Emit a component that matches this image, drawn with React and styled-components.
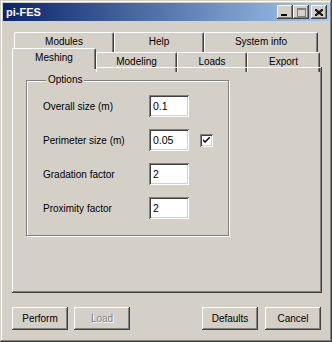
import React from "react";
import styled, { createGlobalStyle, css } from "styled-components";

const Global = createGlobalStyle`
  html, body {
    margin: 0;
    padding: 0;
    background: #d4d0c8;
  }
  * {
    box-sizing: border-box;
  }
`;

const raised = css`
  box-shadow: inset -1px -1px #404040, inset 1px 1px #ffffff,
    inset -2px -2px #808080, inset 2px 2px #d4d0c8;
`;

const sunken = css`
  box-shadow: inset 1px 1px #808080, inset -1px -1px #ffffff,
    inset 2px 2px #404040, inset -2px -2px #d4d0c8;
`;

const Window = styled.div`
  width: 332px;
  height: 342px;
  padding: 3px;
  background: #d4d0c8;
  display: flex;
  flex-direction: column;
  font-family: "Liberation Sans", Arial, sans-serif;
  font-size: 10px;
  color: #000;
  box-shadow: inset -1px -1px #404040, inset 1px 1px #d4d0c8,
    inset -2px -2px #808080, inset 2px 2px #ffffff;
`;

const TitleBar = styled.div`
  height: 18px;
  display: flex;
  align-items: center;
  justify-content: space-between;
  padding: 0 2px 0 3px;
  background: linear-gradient(to right, #0a246a, #a6caf0);
`;

const Title = styled.span`
  color: #fff;
  font-weight: bold;
  font-size: 11px;
`;

const Controls = styled.div`
  display: flex;
  align-items: center;
`;

const CtrlBtn = styled.div`
  width: 16px;
  height: 14px;
  background: #d4d0c8;
  display: flex;
  align-items: center;
  justify-content: center;
  margin-left: ${(p) => (p.$gap ? "2px" : "0")};
  ${raised}
`;

const Body = styled.div`
  flex: 1;
  display: flex;
  flex-direction: column;
  padding: 11px 7px 9px 9px;
`;

const TabRow = styled.div`
  display: flex;
  align-items: flex-end;
  height: ${(p) => p.$h}px;
  padding-left: ${(p) => p.$indent || 0}px;
`;

const Tab = styled.div`
  width: ${(p) => p.$w}px;
  height: ${(p) => (p.$active ? 21 : 20)}px;
  margin-bottom: ${(p) => (p.$active ? -2 : 0)}px;
  align-self: ${(p) => (p.$active ? "flex-end" : "flex-start")};
  position: relative;
  z-index: ${(p) => (p.$active ? 2 : 0)};
  background: #d4d0c8;
  border-top: 1px solid #fff;
  border-left: 1px solid #fff;
  border-right: 1px solid #404040;
  border-radius: 2px 2px 0 0;
  box-shadow: inset -1px 0 #808080;
  display: flex;
  justify-content: center;
  padding-top: 3px;
  white-space: nowrap;
`;

const Panel = styled.div`
  position: relative;
  z-index: 1;
  height: 226px;
  padding: 13px 0 0 14px;
  box-shadow: inset -1px -1px #404040, inset 1px 1px #ffffff,
    inset -2px -2px #808080;
`;

const Group = styled.fieldset`
  width: 203px;
  height: 162px;
  margin: -6px 0 0 0;
  padding: 9px 0 0 16px;
  border: 1px solid #808080;
  box-shadow: inset 1px 1px #fff, 1px 1px #fff;
`;

const Legend = styled.legend`
  margin-left: 3px;
  padding: 0 2px;
  background: #d4d0c8;
  line-height: 12px;
`;

const Grid = styled.div`
  display: grid;
  grid-template-columns: 106px 40px 13px;
  grid-auto-rows: 22px;
  row-gap: 12px;
  align-items: center;
`;

const Label = styled.span`
  white-space: nowrap;
`;

const Input = styled.div`
  height: 22px;
  background: #fff;
  padding: 5px 0 0 4px;
  font-size: 10.5px;
  ${sunken}
`;

const Check = styled.div`
  width: 13px;
  height: 13px;
  margin-left: 11px;
  background: #fff;
  display: flex;
  align-items: center;
  justify-content: center;
  ${sunken}
`;

const Buttons = styled.div`
  margin-top: 14px;
  display: flex;
  justify-content: space-between;
  padding-right: 1px;
`;

const BtnGroup = styled.div`
  display: flex;
  gap: ${(p) => p.$gap}px;
`;

const Button = styled.div`
  width: 56px;
  height: 23px;
  display: flex;
  align-items: center;
  justify-content: center;
  background: #d4d0c8;
  color: ${(p) => (p.$disabled ? "#808080" : "#000")};
  text-shadow: ${(p) => (p.$disabled ? "1px 1px #fff" : "none")};
  ${raised}
`;

const rows = [
  { label: "Overall size (m)", value: "0.1" },
  { label: "Perimeter size (m)", value: "0.05", check: true },
  { label: "Gradation factor", value: "2" },
  { label: "Proximity factor", value: "2" },
];

export default function App() {
  return (
    <>
      <Global />
      <Window>
        <TitleBar>
          <Title>pi-FES</Title>
          <Controls>
            <CtrlBtn>
              <svg width="8" height="7" viewBox="0 0 8 7">
                <rect x="0" y="5" width="6" height="2" fill="#000" />
              </svg>
            </CtrlBtn>
            <CtrlBtn>
              <svg width="9" height="9" viewBox="0 0 9 9">
                <rect x="0.5" y="0.5" width="8" height="8" fill="none" stroke="#808080" />
                <rect x="0" y="0" width="9" height="2" fill="#808080" />
              </svg>
            </CtrlBtn>
            <CtrlBtn $gap>
              <svg width="8" height="7" viewBox="0 0 8 7">
                <path d="M0 0 L8 7 M1 0 L8 6 M0 1 L7 7 M8 0 L0 7 M7 0 L0 6 M8 1 L1 7" stroke="#000" strokeWidth="1" />
              </svg>
            </CtrlBtn>
          </Controls>
        </TitleBar>
        <Body>
          <TabRow $h={20} $indent={2}>
            <Tab $w={100}>Modules</Tab>
            <Tab $w={90}>Help</Tab>
            <Tab $w={114}>System info</Tab>
          </TabRow>
          <TabRow $h={15}>
            <Tab $w={84} $active>Meshing</Tab>
            <Tab $w={81}>Modeling</Tab>
            <Tab $w={70}>Loads</Tab>
            <Tab $w={73}>Export</Tab>
          </TabRow>
          <Panel>
            <Group>
              <Legend>Options</Legend>
              <Grid>
                {rows.map((r) => (
                  <React.Fragment key={r.label}>
                    <Label>{r.label}</Label>
                    <Input>{r.value}</Input>
                    {r.check ? (
                      <Check>
                        <svg width="7" height="7" viewBox="0 0 7 7">
                          <path d="M0 2 L0 4 L2 6 L7 1 L7 -1 L2 4 Z" fill="#000" />
                        </svg>
                      </Check>
                    ) : (
                      <span />
                    )}
                  </React.Fragment>
                ))}
              </Grid>
            </Group>
          </Panel>
          <Buttons>
            <BtnGroup $gap={6}>
              <Button>Perform</Button>
              <Button $disabled>Load</Button>
            </BtnGroup>
            <BtnGroup $gap={7}>
              <Button>Defaults</Button>
              <Button>Cancel</Button>
            </BtnGroup>
          </Buttons>
        </Body>
      </Window>
    </>
  );
}
